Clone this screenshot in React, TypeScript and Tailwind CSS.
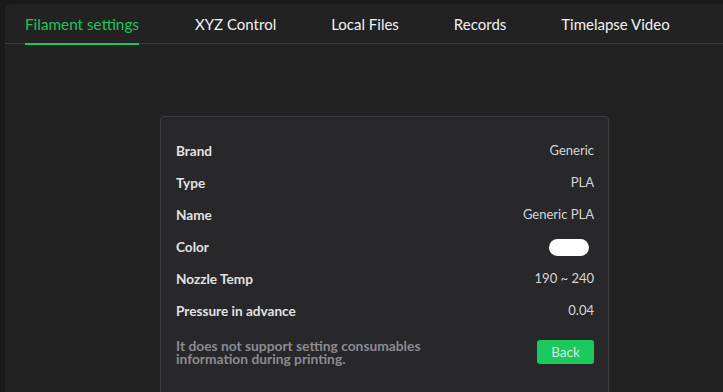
import React from "react";

const tabs = ["Filament settings", "XYZ Control", "Local Files", "Records", "Timelapse Video"];

const rows: { label: string; value: React.ReactNode }[] = [
  { label: "Brand", value: "Generic" },
  { label: "Type", value: "PLA" },
  { label: "Name", value: "Generic PLA" },
  { label: "Color", value: <span className="block w-[40px] h-[17px] rounded-full bg-white mr-[5px]" /> },
  { label: "Nozzle Temp", value: "190 ~ 240" },
  { label: "Pressure in advance", value: "0.04" },
];

export default function App() {
  return (
    <div
      className="w-[723px] h-[392px] bg-[#1a1a1a] pt-[4px] pl-[5px] overflow-hidden"
      style={{ fontFamily: '"Lato", "Open Sans", sans-serif' }}
    >
      <div className="h-full bg-[#222222] rounded-tl-[5px]">
        <div className="flex h-[40px] border-b border-[#3c3c3c] pl-[20px] gap-[55px]">
          {tabs.map((t, i) => (
            <div
              key={t}
              className={
                "relative flex items-center leading-none pt-[2px] " +
                (i === 0 ? "text-[#1fc55a] text-[15.3px] mr-[1px]" : "text-[#f2f2f2] text-[15px]")
              }
            >
              {t}
              {i === 0 && <span className="absolute left-0 right-0 bottom-[-2px] h-[2px] bg-[#1fc55a]" />}
            </div>
          ))}
        </div>
        <div className="pl-[155px] pt-[72px]">
          <div className="w-[449px] h-[300px] bg-[#28282b] border border-[#3e3e41] rounded-[4px] pl-[15px] pr-[14px] pt-[18px]">
            {rows.map((r) => (
              <div key={r.label} className="flex items-center justify-between h-[32px]">
                <span className="font-bold text-[13.6px] text-[#e2e2e2]">{r.label}</span>
                <span className="text-[13px] text-[#d6d6d6]">{r.value}</span>
              </div>
            ))}
            <div className="flex items-center justify-between mt-[12px]">
              <p className="font-bold text-[13.8px] leading-[13px] text-[#8b8b90] w-[270px]">
                It does not support setting consumables information during printing.
              </p>
              <button className="w-[57px] h-[24px] rounded-[3px] bg-[#1bc95c] text-[13.5px] text-[#d9e7df]">
                Back
              </button>
            </div>
          </div>
        </div>
      </div>
    </div>
  );
}
